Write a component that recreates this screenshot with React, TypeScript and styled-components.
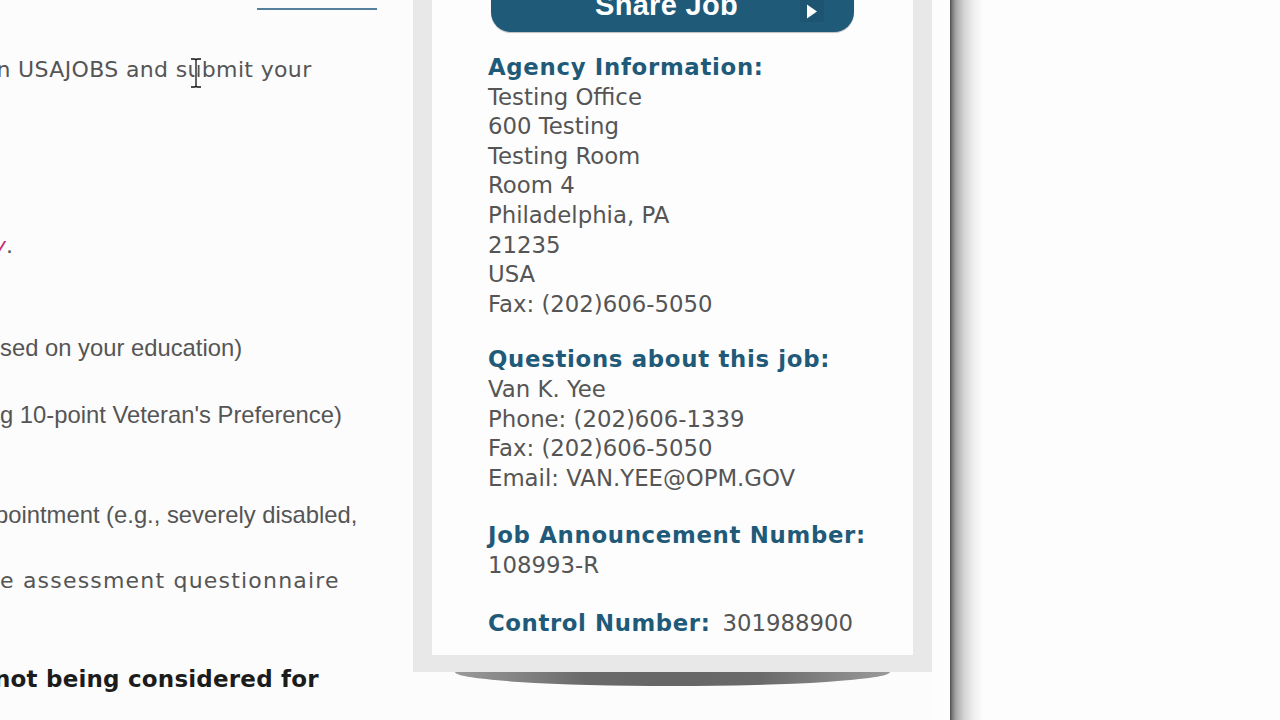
import React from 'react';
import styled, { createGlobalStyle } from 'styled-components';

const GlobalStyle = createGlobalStyle`
  html, body {
    margin: 0;
    padding: 0;
    background: #fcfcfc;
    overflow: hidden;
  }
`;

const Page = styled.div`
  display: flex;
  align-items: flex-start;
  width: 1280px;
  height: 720px;
  overflow: hidden;
  background: #fcfcfc;
`;

const LeftColumn = styled.div`
  position: relative;
  flex: 0 0 413px;
  height: 720px;
  overflow: hidden;
  font-family: 'DejaVu Sans', Verdana, sans-serif;
  color: #555;
`;

const TopLink = styled.div`
  margin-left: 257px;
  width: 120px;
  height: 8px;
  border-bottom: 2px solid #55809c;
`;

type LineProps = {
  $gap: number;
  $shift?: number;
  $spacing?: number;
};

const Line = styled.div<LineProps>`
  margin-top: ${({ $gap }) => $gap}px;
  margin-left: ${({ $shift }) => -($shift || 0)}px;
  letter-spacing: ${({ $spacing }) => $spacing || 0}px;
  height: 30px;
  line-height: 30px;
  font-size: 22px;
  white-space: nowrap;
`;

const ArialLine = styled(Line)`
  font-family: 'Liberation Sans', Arial, sans-serif;
  font-size: 23.8px;
`;

const BoldLine = styled(Line)`
  font-weight: bold;
  color: #1c1c1c;
  font-size: 23px;
`;

const Accent = styled.span`
  color: #c42a78;
  font-style: italic;
`;

const Cursor = styled.svg`
  position: absolute;
  left: 189px;
  top: 58px;
`;

const SidebarWrap = styled.div`
  flex: 0 0 519px;
  display: flex;
  flex-direction: column;
`;

const Frame = styled.div`
  background: #e8e8e8;
  padding: 0 19px 17px 19px;
`;

const Panel = styled.div`
  display: flow-root;
  background: #fdfdfd;
  height: 655px;
  padding: 0 0 0 56px;
  box-sizing: border-box;
  font-family: 'DejaVu Sans', Verdana, sans-serif;
  font-size: 22.8px;
  line-height: 29.6px;
  color: #555;
`;

const ShareButton = styled.div`
  position: relative;
  margin: -20px 0 0 3px;
  width: 363px;
  height: 52px;
  border-radius: 20px;
  background: #1f5a79;
  box-shadow: 0 1px 1px rgba(0, 0, 0, 0.25);
  display: flex;
  align-items: center;
  justify-content: center;
  color: #fff;
  font-family: 'Liberation Sans', Arial, sans-serif;
  font-weight: bold;
  font-size: 29px;
  letter-spacing: 0.3px;
`;

const ButtonLabel = styled.span`
  margin-left: -12px;
`;

const Arrow = styled.span`
  position: absolute;
  right: 30px;
  top: 20px;
  width: 24px;
  height: 22px;
  display: flex;
  align-items: center;
  justify-content: center;
  background: rgba(0, 0, 0, 0.06);
`;

type SectionProps = {
  $gap: number;
};

const Section = styled.div<SectionProps>`
  margin-top: ${({ $gap }) => $gap}px;
`;

const Heading = styled.div`
  color: #1f5a79;
  font-weight: bold;
  font-size: 22.8px;
  letter-spacing: 0.7px;
`;

const HeadingInline = styled.span`
  color: #1f5a79;
  font-weight: bold;
  font-size: 22.8px;
  letter-spacing: 0.6px;
  margin-right: 12px;
`;

const Shadow = styled.div`
  margin: 0 42px 0 42px;
  height: 14px;
  border-radius: 0 0 50% 50% / 0 0 100% 100%;
  background: linear-gradient(to right, #9a9a9a, #6a6a6a 30%, #666 50%, #6a6a6a 70%, #9a9a9a);
`;

const Gutter = styled.div`
  flex: 0 0 18px;
  height: 720px;
  background: #fdfdfd;
`;

const PageEdge = styled.div`
  flex: 0 0 32px;
  height: 720px;
  background: linear-gradient(to right, #4a4a4a 0, #777 2px, #a8a8a8 6px, #d4d4d4 14px, #efefef 24px, #fbfbfb 32px);
`;

const Rest = styled.div`
  flex: 1;
  height: 720px;
  background: #fdfdfd;
`;

const agency = [
  'Testing Office',
  '600 Testing',
  'Testing Room',
  'Room 4',
  'Philadelphia, PA',
  '21235',
  'USA',
  'Fax: (202)606-5050',
];

const contact = [
  'Van K. Yee',
  'Phone: (202)606-1339',
  'Fax: (202)606-5050',
  'Email: VAN.YEE@OPM.GOV',
];

const App = () => (
  <>
    <GlobalStyle />
    <Page>
      <LeftColumn>
        <TopLink />
        <Line $gap={45} $shift={10} $spacing={0.35}>in USAJOBS and submit your</Line>
        <Line $gap={146} $shift={7}>
          <Accent>y</Accent>.
        </Line>
        <ArialLine $gap={72}>sed on your education)</ArialLine>
        <ArialLine $gap={37}>g 10-point Veteran's Preference)</ArialLine>
        <ArialLine $gap={70} $shift={5}>pointment (e.g., severely disabled,</ArialLine>
        <Line $gap={36} $spacing={1.2}>e assessment questionnaire</Line>
        <BoldLine $gap={68} $shift={6} $spacing={0.2}>not being considered for</BoldLine>
        <Cursor width="14" height="30" viewBox="0 0 14 30">
          <path d="M2 1h4l1 1 1-1h4M7 2v26M2 29h4l1-1 1 1h4" fill="none" stroke="#fff" strokeWidth="3" />
          <path d="M2 1h4l1 1 1-1h4M7 2v26M2 29h4l1-1 1 1h4" fill="none" stroke="#111" strokeWidth="1.3" />
        </Cursor>
      </LeftColumn>
      <SidebarWrap>
        <Frame>
          <Panel>
            <ShareButton>
              <ButtonLabel>Share Job</ButtonLabel>
              <Arrow>
                <svg width="12" height="15" viewBox="0 0 12 15">
                  <path d="M1 0.5 L11 7.5 L1 14.5 Z" fill="#fff" />
                </svg>
              </Arrow>
            </ShareButton>
            <Section $gap={21}>
              <Heading>Agency Information:</Heading>
              {agency.map((l) => (
                <div key={l}>{l}</div>
              ))}
            </Section>
            <Section $gap={26}>
              <Heading>Questions about this job:</Heading>
              {contact.map((l) => (
                <div key={l}>{l}</div>
              ))}
            </Section>
            <Section $gap={28}>
              <Heading>Job Announcement Number:</Heading>
              <div>108993-R</div>
            </Section>
            <Section $gap={28}>
              <HeadingInline>Control Number:</HeadingInline>
              301988900
            </Section>
          </Panel>
        </Frame>
        <Shadow />
      </SidebarWrap>
      <Gutter />
      <PageEdge />
      <Rest />
    </Page>
  </>
);

export default App;
